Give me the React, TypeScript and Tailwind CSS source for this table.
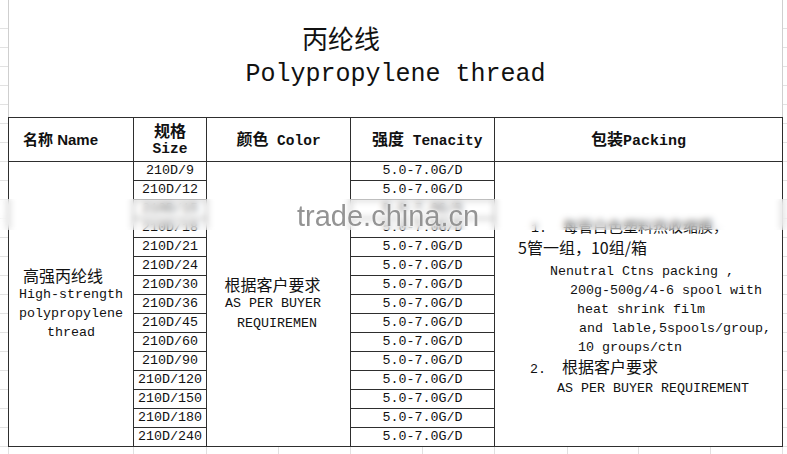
const SIZES = [
  "210D/9",
  "210D/12",
  "210D/15",
  "210D/18",
  "210D/21",
  "210D/24",
  "210D/30",
  "210D/36",
  "210D/45",
  "210D/60",
  "210D/90",
  "210D/120",
  "210D/150",
  "210D/180",
  "210D/240",
];

const TENACITY = "5.0-7.0G/D";

// faint excel gridline columns under the table
const SHEET_COLS = [125, 73, 72, 72, 72, 72, 73, 71, 72, 72];

const cjk = "font-['Noto_Sans_CJK_SC',sans-serif]";

export default function App() {
  return (
    <div className="relative h-[454px] w-[787px] overflow-hidden bg-white font-['Liberation_Mono','Noto_Sans_CJK_SC',monospace] text-[13.33px] text-[#111]">
      <div className="flex">
        {/* left margin with sheet row lines */}
        <div className="h-[454px] w-[8px] bg-[repeating-linear-gradient(to_bottom,transparent_0px,transparent_18px,#e2e2e2_18px,#e2e2e2_19px)] bg-[position:0_10px]" />

        <div className="w-[775px]">
          {/* title block */}
          <div className="h-[117px] border-x border-[#cfcfcf] pt-[25px]">
            <div className={`${cjk} pl-[293px] text-[26px] leading-[26px] text-[#111]`}>丙纶线</div>
            <div className="mt-[11px] text-center text-[25px] leading-[25px] text-[#111]">Polypropylene thread</div>
          </div>

          {/* table */}
          <div className="grid grid-cols-[125px_73px_144px_144px_288px] grid-rows-[44px_repeat(15,19px)] border-l border-t border-[#2e2e2e]">
            <div className="flex items-center border-b border-r border-[#2e2e2e] pl-[14px] font-bold">
              <span className="whitespace-pre">
                <span className={`${cjk} text-[15px]`}>名称</span>
                <span className="font-['Liberation_Sans',sans-serif] text-[15px]"> Name</span>
              </span>
            </div>
            <div className="flex flex-col items-center justify-center border-b border-r border-[#2e2e2e] font-bold leading-[19px]">
              <span className={`${cjk} text-[16px]`}>规格</span>
              <span className="text-[14.5px]">Size</span>
            </div>
            <div className="flex items-center justify-center border-b border-r border-[#2e2e2e] font-bold">
              <span className="whitespace-pre">
                <span className={`${cjk} text-[16px]`}>颜色</span>
                <span className="text-[14.5px]"> Color</span>
              </span>
            </div>
            <div className="flex items-center border-b border-r border-[#2e2e2e] pl-[21px] font-bold">
              <span className="whitespace-pre">
                <span className={`${cjk} text-[16px]`}>强度</span>
                <span className="text-[14.5px]"> Tenacity</span>
              </span>
            </div>
            <div className="flex items-center justify-center border-b border-r border-[#2e2e2e] font-bold">
              <span>
                <span className={`${cjk} text-[16px]`}>包装</span>
                <span className="text-[15px]">Packing</span>
              </span>
            </div>

            {/* name, spans all size rows */}
            <div className="col-start-1 row-span-15 row-start-2 flex flex-col items-center justify-center border-b border-r border-[#2e2e2e] text-center leading-[19px]">
              <span className={`${cjk} pr-[16px] text-[16px]`}>高强丙纶线</span>
              <span>High-strength</span>
              <span>polypropylene</span>
              <span>thread</span>
            </div>

            {SIZES.map((s, i) => (
              <div
                key={s}
                className="col-start-2 flex items-center justify-center border-b border-r border-[#2e2e2e] leading-none"
                style={{ gridRowStart: i + 2 }}
              >
                {s}
              </div>
            ))}

            <div className="col-start-3 row-span-15 row-start-2 flex flex-col items-center justify-center border-b border-r border-[#2e2e2e] text-center leading-[19.5px]">
              <span className={`${cjk} pr-[12px] text-[16px]`}>根据客户要求</span>
              <span className="pr-[11px]">AS PER BUYER</span>
              <span className="pr-[3px]">REQUIREMEN</span>
            </div>

            {SIZES.map((s, i) => (
              <div
                key={s + "-t"}
                className="col-start-4 flex items-center justify-center border-b border-r border-[#2e2e2e] leading-none"
                style={{ gridRowStart: i + 2 }}
              >
                {TENACITY}
              </div>
            ))}

            <div className="col-start-5 row-span-15 row-start-2 flex flex-col border-b border-r border-[#2e2e2e] pt-[54px] leading-[19px] whitespace-pre">
              <div className="pl-[36px]">
                1.  <span className={`${cjk} text-[15px]`}>每管白色塑料热收缩膜，</span>
              </div>
              <div className={`${cjk} pl-[23px] text-[16px]`}>5管一组，10组/箱</div>
              <div className="mt-[5px] pl-[55px]">Nenutral Ctns packing ,</div>
              <div className="pl-[75px]">200g-500g/4-6 spool with</div>
              <div className="pl-[82px]">heat shrink film</div>
              <div className="pl-[84px]">and lable,5spools/group,</div>
              <div className="pl-[83px]">10 groups/ctn</div>
              <div className="pl-[35px]">
                2.  <span className={`${cjk} text-[16px]`}>根据客户要求</span>
              </div>
              <div className="pl-[62px]">AS PER BUYER REQUIREMENT</div>
            </div>
          </div>

          {/* sheet columns below table */}
          <div className="flex h-[8px] border-l border-[#e0e0e0]">
            {SHEET_COLS.map((w, i) => (
              <div key={i} className="h-full shrink-0 border-r border-[#e0e0e0]" style={{ width: w }} />
            ))}
          </div>
        </div>

        {/* right margin */}
        <div className="h-[454px] w-[4px] bg-[repeating-linear-gradient(to_bottom,transparent_0px,transparent_18px,#e2e2e2_18px,#e2e2e2_19px)] bg-[position:0_10px]" />
      </div>

      {/* watermark band */}
      <div className="absolute left-0 top-[199px] h-[31px] w-full bg-white/30 backdrop-blur-[3px]" />
      <div className="absolute left-[297px] top-[202px] font-['Liberation_Sans',sans-serif] text-[29px] leading-none text-[#949494] [text-shadow:0_0_3px_#fff]">
        trade.china.cn
      </div>
    </div>
  );
}
